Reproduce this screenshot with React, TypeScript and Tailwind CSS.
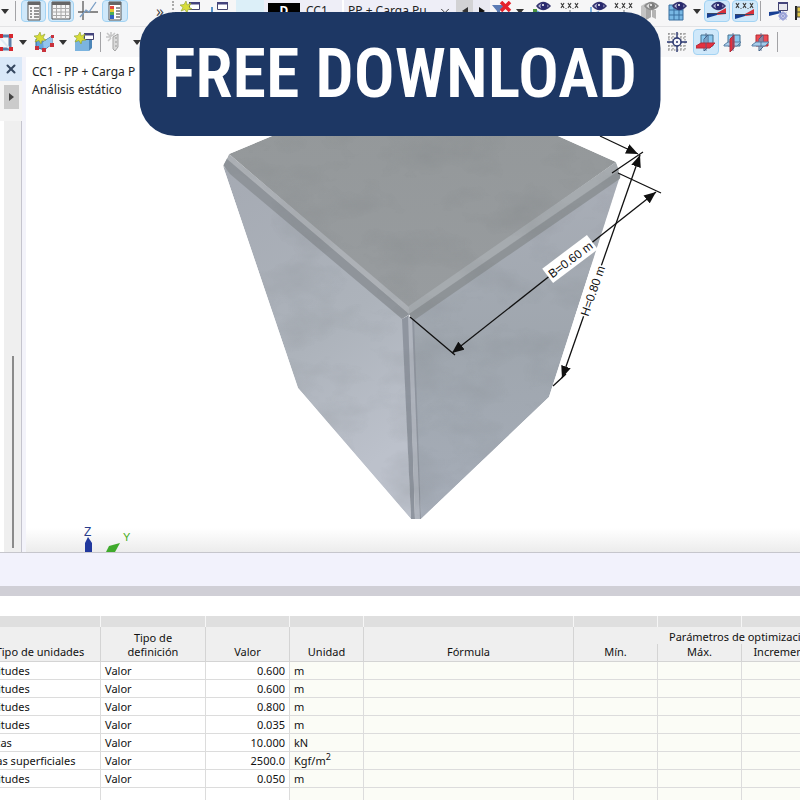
import type { ReactNode } from 'react';
import { clsx } from 'clsx';
import { ChevronDown, X } from 'lucide-react';

interface ToolProps {
  label: string;
  active?: boolean;
  className?: string;
  children: ReactNode;
}

function Tool({ label, active, className, children }: ToolProps) {
  return (
    <button
      type="button"
      aria-label={label}
      className={clsx(
        'flex h-full shrink-0 items-center justify-center',
        active && 'rounded-sm border border-[#a3d3f3] bg-[#cfe8fa]',
        className,
      )}
    >
      {children}
    </button>
  );
}

function Icon({ children }: { children: ReactNode }) {
  return (
    <svg viewBox="0 0 20 20" className="size-5 shrink-0" fill="none" aria-hidden="true">
      {children}
    </svg>
  );
}

function Caret() {
  return (
    <svg viewBox="0 0 8 5" className="h-[5px] w-2 shrink-0" aria-hidden="true">
      <path d="M0 0h8L4 5z" fill="#333" />
    </svg>
  );
}

function Separator({ className }: { className?: string }) {
  return <div className={clsx('h-5 w-px shrink-0 bg-[#a3a3a6]', className)} />;
}

const eye = (
  <g>
    <path d="M5 5Q11-2 18 5Q11 12 5 5Z" fill="#b9b9da" stroke="#34346f" strokeWidth="1.5" />
    <circle cx="12" cy="5" r="3.5" fill="#29296e" />
    <circle cx="11" cy="4" r="1" fill="#fff" />
  </g>
);

const star = <path d="M6 0l1.2 4L11 2 9 6l3 2-4 .5L7 12 5 8.5 1 10l2-3.5L0 4l4-.5z" fill="#d8dc3a" stroke="#8d9f2a" strokeWidth=".6" />;

const numbers = (
  <path d="M1 2l3 5M4 2L1 7M8 2l3 5M11 2L8 7M15 2l3 5M18 2l-3 5M6 7v.8M13 7v.8" stroke="#444" strokeWidth="1.2" />
);

const diagram = (
  <g>
    <path d="M0 17V13l10-1v2z" fill="#173f94" />
    <path d="M10 12l9-5v6l-9 1z" fill="#d8303a" />
    <path d="M0 12.5h19" stroke="#3c4863" />
  </g>
);

const SheetIcon = () => (
  <Icon>
    <path d="M4 1h12v18H4z" fill="#f7f7f7" stroke="#555" />
    <path d="M4 1h12v3H4z" fill="#666" />
    <path d="M6 7h2M6 10h2M6 13h2M6 16h2M10 7h5M10 10h5M10 13h5M10 16h5" stroke="#777" strokeWidth="1.3" />
  </Icon>
);

const GridIcon = () => (
  <Icon>
    <path d="M1 1h18v17H1z" fill="#f5f5f5" stroke="#555" />
    <path d="M1 1h18v3H1z" fill="#666" />
    <path d="M1 7.5h18M1 11h18M1 14.5h18M5.5 4v14M10 4v14M14.5 4v14" stroke="#aaa" />
  </Icon>
);

const AxisIcon = () => (
  <Icon>
    <path d="M5 0v19M0 11h20" stroke="#666" strokeWidth="1.4" />
    <path d="M2 16l6-7 3 2 7-10" stroke="#7b9fc6" strokeWidth="1.3" />
  </Icon>
);

const LegendIcon = () => (
  <Icon>
    <path d="M4 1h12v18H4z" fill="#fff" stroke="#555" />
    <path d="M4 1h12v3H4z" fill="#666" />
    <path d="M5 5h4v3H5z" fill="#e2463e" />
    <path d="M5 8h4v3H5z" fill="#e8c832" />
    <path d="M5 11h4v3H5z" fill="#4cae57" />
    <path d="M5 14h4v4H5z" fill="#2f62c4" />
    <path d="M11 7h4M11 10h4M11 13h4M11 16h4" stroke="#777" strokeWidth="1.3" />
  </Icon>
);

const WindowIcon = ({ isNew }: { isNew?: boolean }) => (
  <Icon>
    <path d="M9.5 1.5h10v7h-10z" fill="#fff" stroke="#44446e" />
    <path d="M9 1h11v2.5H9z" fill="#44447c" />
    {isNew ? star : <path d="M4 6v12M4 12h5" stroke="#5a93c8" strokeWidth="2" />}
  </Icon>
);

const FilterIcon = () => (
  <Icon>
    <path d="M0 4h13l-5 6v8l-3-2v-6z" fill="#5c7db4" />
    <path d="M9 1l9 9M18 1l-9 9" stroke="#e5222b" strokeWidth="3.5" />
  </Icon>
);

const NodeEyeIcon = () => (
  <Icon>
    <path d="M3 8v10M3 9l5 3" stroke="#68a7d6" strokeWidth="1.5" />
    <path d="M1 8h4v4H1z" fill="#49913e" />
    {eye}
  </Icon>
);

const LineEyeIcon = () => (
  <Icon>
    <path d="M3 6v10M3 13l8-2" stroke="#5b9cd5" strokeWidth="1.5" />
    {eye}
  </Icon>
);

const NumbersIcon = () => (
  <Icon>
    {numbers}
    <path d="M10 9v9M6 13l4 3 4-3" stroke="#70747b" />
  </Icon>
);

const SolidEyeIcon = () => (
  <Icon>
    <path d="M1 5l5-3 5 2v12l-5 3-5-3z" fill="#c4c4c4" />
    <path d="M6 7l5-3v12l-5 3z" fill="#a8a8a8" />
    <path d="M12 9h4v9l-4-2z" fill="#b4b4b4" />
    <path d="M5 5Q11-2 18 5Q11 12 5 5Z" fill="#ddd" stroke="#8a8a8a" strokeWidth="1.5" />
    <circle cx="12" cy="5" r="3" fill="#7c7c7c" />
    <circle cx="11" cy="4" r="1" fill="#fff" />
  </Icon>
);

const MeshEyeIcon = () => (
  <Icon>
    <path d="M1 4h14v15H1z" fill="#78b8e4" stroke="#386f9f" />
    <path d="M1 9h14M1 14h14M6 4v15M11 4v15" stroke="#386f9f" />
    {eye}
  </Icon>
);

const ResultEyeIcon = () => (
  <Icon>
    {diagram}
    {eye}
  </Icon>
);

const ResultValueIcon = () => (
  <Icon>
    {numbers}
    <g transform="translate(0 1)">{diagram}</g>
  </Icon>
);

const ResultWindowIcon = () => (
  <Icon>
    <path d="M0 15v-4l12-1v2z" fill="#173f94" />
    <path d="M9.5 1.5h9v8h-9z" fill="#e8e8ef" stroke="#44446e" />
    <path d="M9 1h10v2H9z" fill="#44447c" />
    <circle cx="14" cy="15" r="3" stroke="#9ba3d8" strokeWidth="2" />
    <path d="M14 10v10M9 15h10M10.5 11.5l7 7M17.5 11.5l-7 7" stroke="#9ba3d8" />
  </Icon>
);

const FlagIcon = () => (
  <Icon>
    <path d="M1 5v14" stroke="#222" strokeWidth="2" />
    <path d="M2 6h12v10H2z" fill="#e2c94a" stroke="#444" />
    <path d="M2 11h12M7 6v10" stroke="#444" />
  </Icon>
);

const SurfaceIcon = () => (
  <Icon>
    <path d="M2 4h12v13H2z" fill="#f7f9fb" stroke="#5c7fa8" strokeWidth="3" />
    <path d="M3 5l10 11" stroke="#dfeaf3" strokeWidth="2" />
    <path d="M13 2h4v4h-4zM13 15h4v4h-4zM3 15h4v4H3zM3 2h4v4H3z" fill="#d7272e" />
  </Icon>
);

const ShellIcon = () => (
  <Icon>
    <path d="M2 7l7 3 9-6v8l-8 6-8-3z" fill="#65a5d9" stroke="#2f679d" />
    <path d="M9 10l9-6v8l-8 6z" fill="#93c5ec" />
    {star}
    <path d="M17 3h3v3h-3zM1 14h4v4H1zM8 16h4v4H8zM16 11h4v4h-4z" fill="#c9323c" />
  </Icon>
);

const SolidIcon = () => (
  <Icon>
    <path d="M1 8l3-3h14l-3 3z" fill="#bcdcf2" />
    <path d="M1 8h14v11H1z" fill="#7cb4df" />
    <path d="M15 8l3-3v11l-3 3z" fill="#4c86b8" />
    <path d="M10.5 1.5h9v6h-9z" fill="#fff" stroke="#44446e" />
    <path d="M10 1h10v2.5H10z" fill="#44447c" />
    {star}
  </Icon>
);

const SupportIcon = () => (
  <Icon>
    <path d="M6 0v5M1 5h5M2 1l3 3M10 1L7 4M3 9l3-3" stroke="#c6c6c6" strokeWidth="1.5" />
    <path d="M8 5l5-3v13l-3 4-2-2z" fill="#dadada" stroke="#a4a4a4" />
    <path d="M11 5v11" stroke="#999" strokeDasharray="2 2" />
  </Icon>
);

const SnapIcon = () => (
  <Icon>
    <path d="M1 2h18M1 6h18M1 14h18M1 18h18M2 1v18M6 1v18M14 1v18M18 1v18" stroke="#777" strokeDasharray="1.5 1.5" />
    <path d="M10 0v20M0 10h20" stroke="#29366f" strokeWidth="1.4" />
    <circle cx="10" cy="10" r="4" fill="#f7f7fb" stroke="#29366f" strokeWidth="1.5" />
    <circle cx="10" cy="10" r="1" fill="#29366f" />
  </Icon>
);

type Plane = 'xy' | 'xz' | 'yz';

const PlaneIcon = ({ plane }: { plane: Plane }) => (
  <Icon>
    <path d="M5 3h12v11H5z" fill={plane === 'yz' ? '#ef4a52' : '#8cc8ee'} stroke={plane === 'yz' ? '#b02c35' : '#44708f'} />
    {plane !== 'xz' && <path d="M8 7l4-4v12l-4 4z" fill="#a5d1ef" fillOpacity=".6" stroke="#44658a" />}
    {plane === 'xy' ? (
      <path d="M0 14l5-3h14l-5 5H0z" fill="#e5303f" stroke="#b32c3a" />
    ) : (
      <path d="M1 13l4-3h13l-4 4H1z" fill="#a5cbea" stroke="#5a7fa3" />
    )}
    {plane === 'xz' && <path d="M7 7l4-4v13l-4 4z" fill="#e5303f" stroke="#b32c3a" />}
    <path d="M10 1v18" stroke="#4b5f86" strokeWidth=".8" />
  </Icon>
);

function MainToolbar() {
  return (
    <div className="flex h-[27px] shrink-0 items-start overflow-hidden border-b border-[#e3e3e5] bg-[#f6f6f7]">
      <div className="flex h-[22px] shrink-0 items-center">
        <Tool label="Más" className="w-[10px]"><Caret /></Tool>
        <Separator className="mx-[5px]" />
        <Tool label="Navegador" active className="w-[25px]"><SheetIcon /></Tool>
        <Tool label="Tablas" active className="ml-0.5 w-[26px]"><GridIcon /></Tool>
        <Tool label="Diagramas" className="ml-0.5 w-6"><AxisIcon /></Tool>
        <Tool label="Panel" active className="ml-0.5 w-[26px]"><LegendIcon /></Tool>
        <span className="ml-7 w-3 font-['Open_Sans',sans-serif] text-base leading-5 text-[#444]">»</span>
        <div className="mx-1 h-5 border-l-2 border-dotted border-[#aaa]" />
        <Tool label="Nueva ventana" className="w-6"><WindowIcon isNew /></Tool>
        <Tool label="Ventana" className="ml-1 w-6"><WindowIcon /></Tool>
        <div className="ml-1.5 h-full w-7 bg-[#dceff8]" />
        <div className="flex h-full items-center bg-[#eeeef7] pl-1 font-['Noto_Sans','Open_Sans',sans-serif] text-xs text-[#222]">
          <span className="flex h-4 w-8 items-center justify-center bg-black font-bold text-white">D</span>
          <label htmlFor="load-case" className="ml-1.5 w-9">CC1</label>
          <div className="h-full w-0.5 bg-white" />
          <select id="load-case" className="w-[94px] appearance-none bg-transparent pl-1">
            <option>PP + Carga Pu</option>
          </select>
          <ChevronDown className="mr-1 size-3.5" strokeWidth={1.5} />
        </div>
        <Tool label="Anterior" className="w-[17px] bg-[#d2d2d4]">
          <svg viewBox="0 0 6 8" className="h-2 w-1.5"><path d="M6 0v8L0 4z" fill="#333" /></svg>
        </Tool>
        <Tool label="Siguiente" className="w-[17px] bg-[#e9e9f2]">
          <svg viewBox="0 0 6 8" className="h-2 w-1.5"><path d="M0 0v8l6-4z" fill="#111" /></svg>
        </Tool>
        <Tool label="Quitar filtro" className="w-6"><FilterIcon /></Tool>
        <Tool label="Opciones de filtro" className="w-3"><Caret /></Tool>
        <Tool label="Ver nudos" className="ml-1 w-6"><NodeEyeIcon /></Tool>
        <Tool label="Valores de nudos" className="ml-1 w-6"><NumbersIcon /></Tool>
        <Tool label="Ver cargas" className="ml-1 w-6"><LineEyeIcon /></Tool>
        <Tool label="Valores de cargas" className="ml-0.5 w-6"><NumbersIcon /></Tool>
        <Tool label="Ver sólidos" className="ml-0.5 w-6"><SolidEyeIcon /></Tool>
        <Tool label="Ver malla" className="ml-1 w-6"><MeshEyeIcon /></Tool>
        <Tool label="Opciones de malla" className="w-[14px]"><Caret /></Tool>
        <Tool label="Ver resultados" active className="w-[26px]"><ResultEyeIcon /></Tool>
        <Tool label="Valores de resultados" active className="ml-0.5 w-[26px]"><ResultValueIcon /></Tool>
        <Separator className="ml-0.5" />
        <Tool label="Ajustes de resultados" className="ml-1.5 w-6"><ResultWindowIcon /></Tool>
        <Tool label="Secciones" className="ml-0.5 w-6"><FlagIcon /></Tool>
      </div>
    </div>
  );
}

function EditToolbar() {
  return (
    <div className="flex h-[30px] shrink-0 items-center justify-between overflow-hidden bg-[#f7f7f8]">
      <div className="flex h-[26px] shrink-0 items-center">
        <Tool label="Superficie" className="-ml-1 w-5"><SurfaceIcon /></Tool>
        <Tool label="Tipos de superficie" className="w-[14px]"><Caret /></Tool>
        <Tool label="Nueva lámina" className="ml-0.5 w-6"><ShellIcon /></Tool>
        <Tool label="Tipos de lámina" className="w-[14px]"><Caret /></Tool>
        <Tool label="Nuevo sólido" className="ml-0.5 w-6"><SolidIcon /></Tool>
        <Separator className="mx-1" />
        <Tool label="Apoyo" className="w-5"><SupportIcon /></Tool>
        <Tool label="Tipos de apoyo" className="ml-1 w-4"><Caret /></Tool>
      </div>
      <div className="flex h-[26px] shrink-0 items-center">
        <Tool label="Rejilla" className="mr-1 w-6"><SnapIcon /></Tool>
        <Tool label="Plano XY" active className="w-[26px]"><PlaneIcon plane="xy" /></Tool>
        <Tool label="Plano XZ" className="ml-0.5 w-6"><PlaneIcon plane="xz" /></Tool>
        <Tool label="Plano YZ" className="ml-1 w-6"><PlaneIcon plane="yz" /></Tool>
        <Separator className="mr-[22px] ml-1" />
      </div>
    </div>
  );
}

function NavigatorEdge() {
  return (
    <aside className="flex w-[26px] shrink-0 flex-col bg-[#f3f3fa]">
      <button type="button" aria-label="Cerrar" className="flex h-6 w-[22px] items-center justify-center bg-[#d9e8f8]">
        <X className="size-3.5 text-[#354760]" strokeWidth={3.5} />
      </button>
      <div className="flex h-10 w-[22px] items-start justify-center bg-[#f4f4f4] pt-1">
        <button type="button" aria-label="Desplazar" className="flex h-6 w-[15px] items-center justify-center bg-[#cbcbcb]">
          <svg viewBox="0 0 5 8" className="h-2 w-[5px]"><path d="M0 0v8l5-4z" fill="#444" /></svg>
        </button>
      </div>
      <div className="flex w-[22px] grow items-end justify-center border-r border-l-4 border-r-[#c4c4ce] border-l-white bg-[#efefef] pb-1">
        <div className="h-48 w-0.5 bg-[#8b8b8b]" />
      </div>
    </aside>
  );
}

/* Coordinates follow the 800 x 800 work area, cropped to the viewport. */
function ModelView() {
  return (
    <svg viewBox="26 57 774 495" className="block h-[495px] w-full" role="img" aria-label="Modelo de hormigón">
      <defs>
        <linearGradient id="top" x1="0" y1="0" x2="0" y2="1">
          <stop offset="0" stopColor="#94989a" />
          <stop offset="1" stopColor="#989c9f" />
        </linearGradient>
        <linearGradient id="left" x1="0" y1="0" x2=".4" y2="1">
          <stop offset="0" stopColor="#a5aab3" />
          <stop offset=".6" stopColor="#adb3bb" />
          <stop offset="1" stopColor="#bcc1cb" />
        </linearGradient>
        <linearGradient id="right" x1="0" y1="0" x2="0" y2="1">
          <stop offset="0" stopColor="#a9aeb7" />
          <stop offset=".5" stopColor="#9fa6ae" />
          <stop offset="1" stopColor="#a6adb8" />
        </linearGradient>
        <linearGradient id="floor" x1="0" y1="0" x2="0" y2="1">
          <stop offset="0" stopColor="#fff" />
          <stop offset="1" stopColor="#ececec" />
        </linearGradient>
        <filter id="concrete" x="0" y="0" width="1" height="1" colorInterpolationFilters="sRGB">
          <feTurbulence type="fractalNoise" baseFrequency=".018 .03" numOctaves="4" seed="8" />
          <feColorMatrix values="0 0 0 0 .45  0 0 0 0 .47  0 0 0 0 .48  1.8 0 0 0 -.8" />
        </filter>
        <clipPath id="body">
          <path d="M223 166l6-12 43-18V120h286v16l58 26 5 13-72 222-128 122h-10L298 388z" />
        </clipPath>
        <marker id="arrow" viewBox="0 0 12 10" refX="12" refY="5" markerWidth="12" markerHeight="10" markerUnits="userSpaceOnUse" orient="auto-start-reverse">
          <path d="M0 0l12 5-12 5z" fill="#111" />
        </marker>
      </defs>

      <rect x="26" y="528" width="774" height="24" fill="url(#floor)" />

      <g clipPath="url(#body)">
        <path d="M223 166L403 319l8 200L298 388z" fill="url(#left)" />
        <path d="M411 317l210-144-72 224-128 122z" fill="url(#right)" />
        <path d="M229 154l43-18V120h286v16l58 26-207 147z" fill="url(#top)" />
        <path d="M223 165l4-7 183 156-8 5-172-145z" fill="#8f949a" />
        <path d="M227 159l2-5 180 153v7z" fill="#adb1b6" />
        <path d="M409 315v-9l207-144 3 9z" fill="#a6abaf" />
        <path d="M409 314l209-143 3 7-208 143z" fill="#8e9397" />
        <path d="M402 319l7-4 6 204h-4z" fill="#8f959f" />
        <path d="M408 316l5 2 8 201h-6z" fill="#b0b5be" />
        <path d="M412 318l2 0 7 201h-1z" fill="#8f959f" />
        <rect x="220" y="130" width="410" height="395" filter="url(#concrete)" opacity=".18" />
      </g>

      <g stroke="#111" strokeWidth="1.3" fill="none">
        <path d="M600 136l38 18" markerEnd="url(#arrow)" />
        <path d="M612 173l31-21M618 173l43 20M410 317l45 38M553 386l13-12" />
      </g>
      <path d="M574 320l17-53 19-9-19 62z" fill="#fff" />
      <path d="M640 155L562 378" stroke="#111" strokeWidth="1.3" markerStart="url(#arrow)" markerEnd="url(#arrow)" />
      <path d="M452 353L656 192" stroke="#111" strokeWidth="1.3" markerStart="url(#arrow)" markerEnd="url(#arrow)" />
      <g transform="translate(570 259) rotate(-37)">
        <rect x="-28" y="-9" width="56" height="18" fill="#fff" />
        <text y="5" textAnchor="middle" className="fill-[#111] font-['Liberation_Sans',sans-serif] text-[12px]">B=0.60 m</text>
      </g>
      <g transform="translate(593 291) rotate(-71)">
        <rect x="-27" y="-7" width="54" height="14" fill="#fff" />
        <text y="4" textAnchor="middle" className="fill-[#111] font-['Liberation_Sans',sans-serif] text-[12px]">H=0.80 m</text>
      </g>

      <text x="84" y="536" className="fill-[#283b8c] font-['Liberation_Sans',sans-serif] text-[12px]">Z</text>
      <path d="M88 537l4 6v9h-7v-9z" fill="#21389d" />
      <text x="123" y="541" className="fill-[#49ae22] font-['Liberation_Sans',sans-serif] text-[11px]">Y</text>
      <path d="M120 543l-5 9h-9l3-6z" fill="#3faa2c" />
    </svg>
  );
}

interface ParameterRow {
  kind: string;
  value: string;
  unit: ReactNode;
}

const rows: ParameterRow[] = [
  { kind: 'Longitudes', value: '0.600', unit: 'm' },
  { kind: 'Longitudes', value: '0.600', unit: 'm' },
  { kind: 'Longitudes', value: '0.800', unit: 'm' },
  { kind: 'Longitudes', value: '0.035', unit: 'm' },
  { kind: 'Fuerzas', value: '10.000', unit: 'kN' },
  { kind: 'Cargas superficiales', value: '2500.0', unit: <>Kgf/m<sup className="text-[9px]">2</sup></> },
  { kind: 'Longitudes', value: '0.050', unit: 'm' },
];

const cell = 'h-[18px] overflow-hidden border-r border-b border-[#dcdcdc] px-1 py-0 whitespace-nowrap';
const head = 'border-r border-[#d4d4d4] p-0 align-bottom font-normal';

function ParameterTable() {
  return (
    <table className="-ml-8 w-[942px] shrink-0 table-fixed border-separate border-spacing-0 font-['Noto_Sans','Open_Sans',sans-serif] text-[11px] leading-[14px] text-[#111]">
      <colgroup>
        <col className="w-[133px]" />
        <col className="w-[105px]" />
        <col className="w-[84px]" />
        <col className="w-[74px]" />
        <col className="w-[210px]" />
        <col className="w-[84px]" />
        <col className="w-[84px]" />
        <col className="w-[84px]" />
        <col className="w-[84px]" />
      </colgroup>
      <thead className="bg-[#efefef]">
        <tr aria-hidden="true">
          {Array.from({ length: 9 }, (_, i) => (
            <td key={i} className="h-[11px] border-r border-[#f6f6f6] bg-[#dfdfdf] p-0" />
          ))}
        </tr>
        <tr>
          <th rowSpan={2} className={clsx(head, 'border-b pb-0.5 pl-3')}>Tipo de unidades</th>
          <th rowSpan={2} className={clsx(head, 'border-b pb-0.5')}>Tipo de<br />definición</th>
          <th rowSpan={2} className={clsx(head, 'border-b pb-0.5')}>Valor</th>
          <th rowSpan={2} className={clsx(head, 'border-b pb-0.5')}>Unidad</th>
          <th rowSpan={2} className={clsx(head, 'border-b pb-0.5')}>Fórmula</th>
          <th colSpan={4} className={clsx(head, 'h-[17px]')}>Parámetros de optimización</th>
        </tr>
        <tr>
          <th className={clsx(head, 'h-[18px] border-b pb-0.5')}>Mín.</th>
          <th className={clsx(head, 'border-b pb-0.5')}>Máx.</th>
          <th className={clsx(head, 'border-b pb-0.5')}>Incremento</th>
          <th className={clsx(head, 'border-b')} />
        </tr>
      </thead>
      <tbody>
        {rows.map((row, i) => (
          <tr key={i}>
            <td className={cell}>{row.kind}</td>
            <td className={cell}>Valor</td>
            <td className={clsx(cell, 'text-right')}>{row.value}</td>
            <td className={clsx(cell, 'bg-[#fbfcf6]')}>{row.unit}</td>
            {Array.from({ length: 5 }, (_, n) => (
              <td key={n} className={clsx(cell, 'bg-[#fbfcf6]')} />
            ))}
          </tr>
        ))}
        <tr>
          {Array.from({ length: 9 }, (_, n) => (
            <td key={n} className={clsx(cell, n > 2 && 'bg-[#fbfcf6]')} />
          ))}
        </tr>
      </tbody>
    </table>
  );
}

export default function App() {
  return (
    <div className="relative flex h-screen flex-col overflow-hidden bg-white">
      <MainToolbar />
      <EditToolbar />
      <div className="flex shrink-0">
        <NavigatorEdge />
        <main className="relative min-w-0 grow">
          <ModelView />
          <div className="absolute top-1.5 left-1.5 font-['Noto_Sans','Open_Sans',sans-serif] text-[12px] leading-[18px] text-[#222]">
            <p>CC1 - PP + Carga P</p>
            <p>Análisis estático</p>
          </div>
        </main>
      </div>
      <div className="h-[34px] shrink-0 border-t border-[#c6c6cc] bg-[#f2f2fc]" />
      <div className="mb-5 h-[10px] shrink-0 bg-[#d0cfd6]" />
      <ParameterTable />
      <a
        href="#download"
        className="absolute top-3 left-1/2 flex h-[124px] w-[521px] max-w-full -translate-x-1/2 items-center justify-center rounded-[36px] bg-[#1d3764] font-['Roboto_Condensed','Roboto',sans-serif] text-[68px] font-semibold whitespace-nowrap text-white"
      >
        FREE DOWNLOAD
      </a>
    </div>
  );
}
